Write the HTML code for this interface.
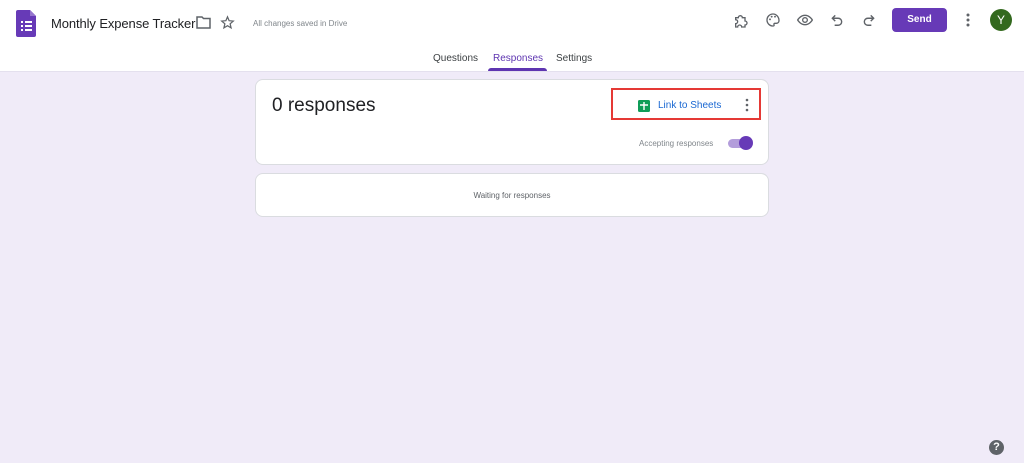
<!DOCTYPE html>
<html><head><style>
body{margin:0;width:1024px;height:463px;background:#f0ebf8;font-family:"Liberation Sans",sans-serif;position:relative;overflow:hidden}
.hdr{position:absolute;left:0;top:0;width:1024px;height:71px;background:#fff;border-bottom:1px solid #e4e0ee}
.a{position:absolute;white-space:nowrap}
.card{position:absolute;background:#fff;border:1px solid #dadce0;border-radius:8px}
svg{position:absolute}
</style></head><body>
<div class="hdr">
 <svg style="left:16px;top:10px" width="20" height="27" viewBox="0 0 20 27"><path d="M2 0h12l6 6v19a2 2 0 0 1-2 2H2a2 2 0 0 1-2-2V2a2 2 0 0 1 2-2z" fill="#673ab7"/><path d="M14 0v6h6z" fill="#9575cd"/><g fill="#fff"><rect x="5" y="11" width="2" height="2"/><rect x="9" y="11" width="7" height="2"/><rect x="5" y="15" width="2" height="2"/><rect x="9" y="15" width="7" height="2"/><rect x="5" y="19" width="2" height="2"/><rect x="9" y="19" width="7" height="2"/></g></svg>
 <div class="a" style="left:51px;top:16px;font-size:13px;color:#202124;letter-spacing:-0.1px">Monthly Expense Tracker</div>
 <svg style="left:196px;top:16px" width="15" height="13" viewBox="0 0 15 13"><path d="M1 1h5l1.5 1.5H14v9.5H1z" fill="none" stroke="#5f6368" stroke-width="1.5"/></svg>
 <svg style="left:220px;top:15px" width="15" height="15" viewBox="0 0 24 24"><path d="M12 3l2.6 6.1 6.6.6-5 4.4 1.5 6.5L12 17.2l-5.7 3.4 1.5-6.5-5-4.4 6.6-.6z" fill="none" stroke="#5f6368" stroke-width="2"/></svg>
 <div class="a" style="left:253px;top:19px;font-size:8px;color:#80868b">All changes saved in Drive</div>
 <svg style="left:733px;top:13px" width="16" height="16" viewBox="0 0 24 24"><path d="M4 7h4a3 3 0 1 1 6 0h4v5a3 3 0 1 1 0 6v3h-5a3 3 0 1 0-6 0H4v-5a3 3 0 1 0 0-6z" fill="none" stroke="#5f6368" stroke-width="2"/></svg>
 <svg style="left:765px;top:12px" width="16" height="16" viewBox="0 0 24 24"><path d="M12 3a9 9 0 0 0 0 18c1.5 0 2-1 1.5-2s0-2 1.5-2h2a4 4 0 0 0 4-4c0-5.5-4-10-9-10z" fill="none" stroke="#5f6368" stroke-width="2"/><circle cx="7.5" cy="11" r="1.4" fill="#5f6368"/><circle cx="10" cy="7" r="1.4" fill="#5f6368"/><circle cx="15" cy="7" r="1.4" fill="#5f6368"/></svg>
 <svg style="left:796px;top:12px" width="18" height="16" viewBox="0 0 24 24"><path d="M1 12s4-7 11-7 11 7 11 7-4 7-11 7S1 12 1 12z" fill="none" stroke="#5f6368" stroke-width="2"/><circle cx="12" cy="12" r="3.5" fill="none" stroke="#5f6368" stroke-width="2"/></svg>
 <svg style="left:830px;top:12px" width="14" height="16" viewBox="0 0 24 24"><path d="M9 4L4 9l5 5M4 9h10a6 6 0 0 1 0 12H8" fill="none" stroke="#5f6368" stroke-width="2.4"/></svg>
 <svg style="left:862px;top:12px" width="14" height="16" viewBox="0 0 24 24"><path d="M15 4l5 5-5 5M20 9H10a6 6 0 0 0 0 12h6" fill="none" stroke="#5f6368" stroke-width="2.4"/></svg>
 <div class="a" style="left:892px;top:8px;width:55px;height:24px;background:#673ab7;border-radius:4px;color:#fff;font-size:10px;font-weight:bold;line-height:23px;text-align:center">Send</div>
 <svg style="left:966px;top:13px" width="4" height="14"><circle cx="2" cy="2" r="1.5" fill="#5f6368"/><circle cx="2" cy="7" r="1.5" fill="#5f6368"/><circle cx="2" cy="12" r="1.5" fill="#5f6368"/></svg>
 <div class="a" style="left:990px;top:9px;width:22px;height:22px;border-radius:50%;background:#33691e;color:#fff;font-size:12px;line-height:22px;text-align:center">Y</div>
 <div class="a" style="left:433px;top:53px;font-size:10px;color:#3c4043">Questions</div>
 <div class="a" style="left:493px;top:53px;font-size:10px;color:#5e35b1">Responses</div>
 <div class="a" style="left:488px;top:68px;width:59px;height:3px;background:#5e35b1;border-radius:3px 3px 0 0"></div>
 <div class="a" style="left:556px;top:53px;font-size:10px;color:#3c4043">Settings</div>
</div>
<div class="card" style="left:255px;top:79px;width:512px;height:84px">
 <div class="a" style="left:16px;top:15px;font-size:19px;color:#202124">0 responses</div>
 <div class="a" style="left:355px;top:8px;width:150px;height:32px;border:2px solid #e53935;box-sizing:border-box"></div>
 <svg style="left:382px;top:20px" width="12" height="12" viewBox="0 0 12 12"><rect width="12" height="12" rx="1.5" fill="#0f9d58"/><path d="M6 2v8M2 5h8" stroke="#fff" stroke-width="1.4"/></svg>
 <div class="a" style="left:402px;top:20px;font-size:10px;color:#1967d2">Link to Sheets</div>
 <svg style="left:489px;top:18px" width="4" height="14"><circle cx="2" cy="2" r="1.3" fill="#5f6368"/><circle cx="2" cy="7" r="1.3" fill="#5f6368"/><circle cx="2" cy="12" r="1.3" fill="#5f6368"/></svg>
 <div class="a" style="left:383px;top:59px;font-size:8px;color:#80868b">Accepting responses</div>
 <div class="a" style="left:472px;top:59px;width:22px;height:9px;border-radius:5px;background:#b39ddb"></div>
 <div class="a" style="left:483px;top:56px;width:14px;height:14px;border-radius:50%;background:#673ab7"></div>
</div>
<div class="card" style="left:255px;top:173px;width:512px;height:42px">
 <div class="a" style="left:0;width:512px;top:17px;font-size:8px;color:#5f6368;text-align:center">Waiting for responses</div>
</div>
<div class="a" style="left:989px;top:440px;width:15px;height:15px;border-radius:50%;background:#5f6368;color:#fff;font-size:11px;font-weight:bold;line-height:15px;text-align:center">?</div>
</body></html>
